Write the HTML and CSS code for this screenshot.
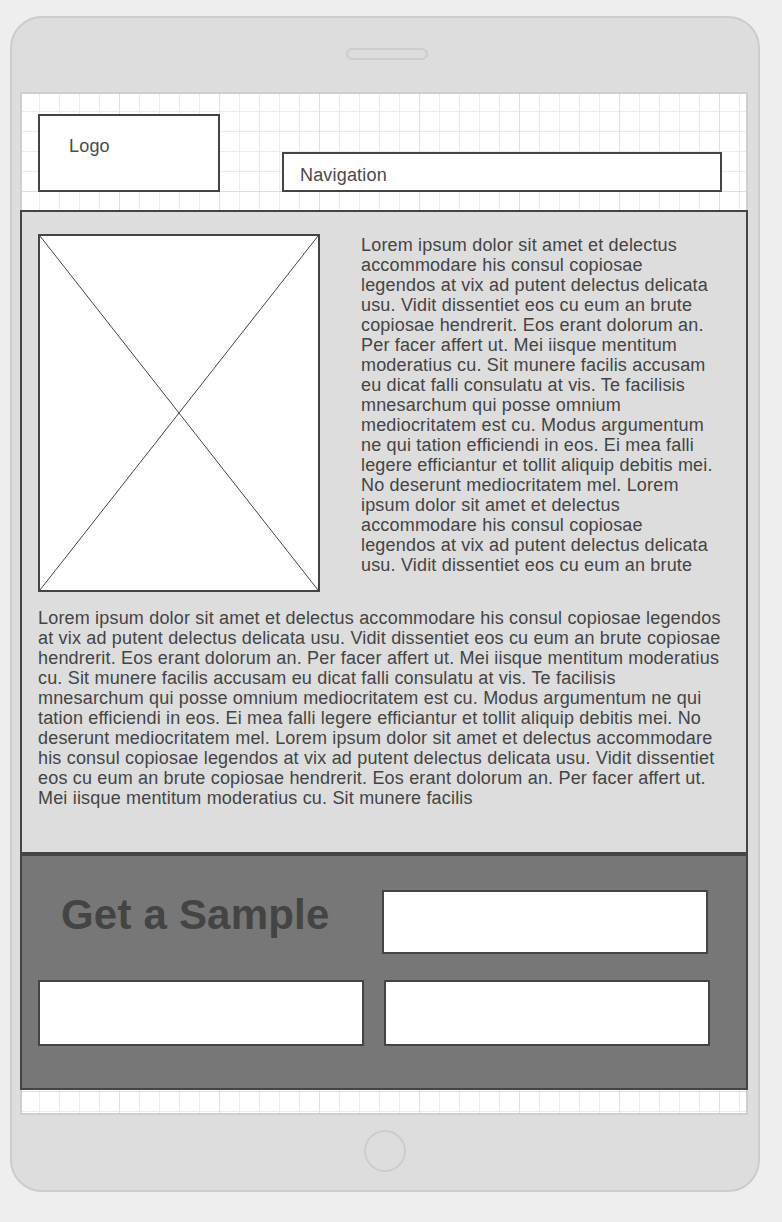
FILE: index.html
```html
<!DOCTYPE html>
<html lang="en">
<head>
<meta charset="utf-8">
<title>Tablet wireframe</title>
<link rel="stylesheet" href="styles.css">
</head>
<body>
<div class="device">
  <div class="speaker"></div>
  <div class="screen">
    <header class="header">
      <div class="logo">Logo</div>
      <nav class="nav">Navigation</nav>
    </header>
    <main class="main">
      <div class="intro">
        <div class="placeholder">
          <svg viewBox="0 0 278 354" preserveAspectRatio="none" width="278" height="354">
            <line x1="0" y1="0" x2="278" y2="354" stroke="#444" stroke-width="1"/>
            <line x1="278" y1="0" x2="0" y2="354" stroke="#444" stroke-width="1"/>
          </svg>
        </div>
        <p class="side-text">Lorem ipsum dolor sit amet et delectus accommodare his consul copiosae legendos at vix ad putent delectus delicata usu. Vidit dissentiet eos cu eum an brute copiosae hendrerit. Eos erant dolorum an. Per facer affert ut. Mei iisque mentitum moderatius cu. Sit munere facilis accusam eu dicat falli consulatu at vis. Te facilisis mnesarchum qui posse omnium mediocritatem est cu. Modus argumentum ne qui tation efficiendi in eos. Ei mea falli legere efficiantur et tollit aliquip debitis mei. No deserunt mediocritatem mel. Lorem ipsum dolor sit amet et delectus accommodare his consul copiosae legendos at vix ad putent delectus delicata usu. Vidit dissentiet eos cu eum an brute</p>
      </div>
      <p class="body-text">Lorem ipsum dolor sit amet et delectus accommodare his consul copiosae legendos at vix ad putent delectus delicata usu. Vidit dissentiet eos cu eum an brute copiosae hendrerit. Eos erant dolorum an. Per facer affert ut. Mei iisque mentitum moderatius cu. Sit munere facilis accusam eu dicat falli consulatu at vis. Te facilisis mnesarchum qui posse omnium mediocritatem est cu. Modus argumentum ne qui tation efficiendi in eos. Ei mea falli legere efficiantur et tollit aliquip debitis mei. No deserunt mediocritatem mel. Lorem ipsum dolor sit amet et delectus accommodare his consul copiosae legendos at vix ad putent delectus delicata usu. Vidit dissentiet eos cu eum an brute copiosae hendrerit. Eos erant dolorum an. Per facer affert ut. Mei iisque mentitum moderatius cu. Sit munere facilis</p>
    </main>
    <section class="sample">
      <div class="sample-row">
        <h2 class="sample-title">Get a Sample</h2>
        <div class="field field-top"></div>
      </div>
      <div class="sample-row sample-row-bottom">
        <div class="field"></div>
        <div class="field"></div>
      </div>
    </section>
    <div class="footer-strip"></div>
  </div>
  <div class="home-button"></div>
</div>
</body>
</html>
```

FILE: styles.css
```css
html, body {
  margin: 0;
  padding: 0;
}

body {
  background: #eeeeee;
  font-family: "Liberation Sans", Arial, sans-serif;
  color: #444444;
  letter-spacing: 0.18px;
}

.device {
  box-sizing: border-box;
  width: 750px;
  height: 1176px;
  margin: 16px 0 0 10px;
  padding: 0 10px 0 8px;
  background: #dddddd;
  border: 2px solid #cccccc;
  border-radius: 32px;
  display: flex;
  flex-direction: column;
}

.speaker {
  box-sizing: border-box;
  width: 82px;
  height: 12px;
  margin: 30px 0 0 326px;
  border: 2px solid #cccccc;
  border-radius: 6px;
}

.screen {
  margin-top: 32px;
  width: 728px;
  height: 1023px;
  background-color: #ffffff;
  background-image:
    linear-gradient(90deg, transparent 99px, #dedede 99px),
    linear-gradient(180deg, transparent 99px, #dedede 99px),
    linear-gradient(90deg, transparent 19px, #ebebeb 19px),
    linear-gradient(180deg, transparent 19px, #ebebeb 19px);
  background-size: 100px 100px, 100px 100px, 20px 20px, 20px 20px;
  box-shadow: inset 0 0 0 2px #cfcfcf;
  display: flex;
  flex-direction: column;
}

.header {
  box-sizing: border-box;
  height: 118px;
  padding: 22px 26px 18px 18px;
  display: flex;
  align-items: flex-end;
}

.logo {
  box-sizing: border-box;
  width: 182px;
  height: 78px;
  padding: 20px 0 0 29px;
  background: #ffffff;
  border: 2px solid #444444;
  font-size: 18px;
  line-height: 20px;
  color: #4a4a4a;
}

.nav {
  box-sizing: border-box;
  width: 440px;
  height: 40px;
  margin-left: 62px;
  padding: 11px 0 0 16px;
  background: #ffffff;
  border: 2px solid #444444;
  font-size: 18px;
  line-height: 20px;
  color: #4a4a4a;
}

.main {
  box-sizing: border-box;
  height: 644px;
  padding: 22px 0 0 16px;
  background: #dddddd;
  border: 2px solid #444444;
}

.intro {
  display: flex;
  align-items: flex-start;
}

.placeholder {
  box-sizing: border-box;
  width: 282px;
  height: 358px;
  background: #ffffff;
  border: 2px solid #444444;
  flex: none;
}

.placeholder svg {
  display: block;
}

.side-text {
  width: 355px;
  margin: 1px 0 0 41px;
  font-size: 18px;
  line-height: 20px;
}

.body-text {
  width: 685px;
  margin: 16px 0 0 0;
  font-size: 18px;
  line-height: 20px;
}

.sample {
  box-sizing: border-box;
  height: 236px;
  padding: 34px 0 0 16px;
  background: #777777;
  border: 2px solid #444444;
}

.sample-row {
  display: flex;
  align-items: flex-start;
}

.sample-title {
  box-sizing: border-box;
  width: 344px;
  margin: 1px 0 0 0;
  padding-left: 23px;
  font-size: 42px;
  line-height: 48px;
  font-weight: bold;
  letter-spacing: 0.2px;
  color: #444444;
}

.field {
  box-sizing: border-box;
  width: 326px;
  height: 66px;
  background: #ffffff;
  border: 2px solid #444444;
}

.field-top {
  height: 64px;
}

.sample-row-bottom {
  margin-top: 26px;
  gap: 20px;
}

.footer-strip {
  flex: 1;
}

.home-button {
  box-sizing: border-box;
  width: 42px;
  height: 42px;
  margin: 15px 0 0 344px;
  border: 2px solid #cccccc;
  border-radius: 50%;
}
```
